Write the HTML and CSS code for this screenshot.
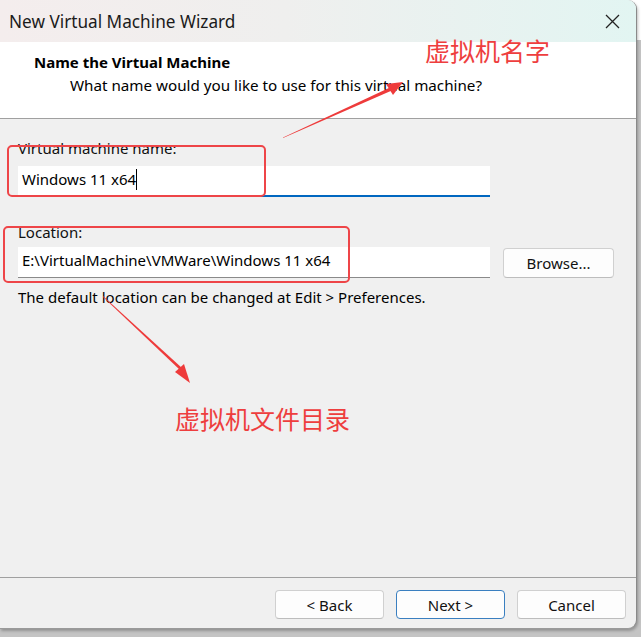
FILE: index.html
```html
<!DOCTYPE html>
<html>
<head>
<meta charset="utf-8">
<link rel="stylesheet" href="styles.css">
</head>
<body>
<div class="screen">
  <div class="window">
    <div class="titlebar">
      <span class="title">New Virtual Machine Wizard</span>
      <svg class="close" width="15" height="15" viewBox="0 0 15 15"><path d="M1 1 L14 14 M14 1 L1 14" stroke="#222" stroke-width="1.3" fill="none"/></svg>
    </div>
    <div class="header">
      <div class="h-title">Name the Virtual Machine</div>
      <div class="h-sub">What name would you like to use for this virtual machine?</div>
    </div>
    <div class="content">
      <div class="label">Virtual machine name:</div>
      <div class="input focused name-input">Windows 11 x64<span class="caret"></span></div>
      <div class="label loc-label">Location:</div>
      <div class="row">
        <div class="input">E:\VirtualMachine\VMWare\Windows 11 x64</div>
        <div class="btn browse">Browse...</div>
      </div>
      <div class="note">The default location can be changed at Edit &gt; Preferences.</div>
    </div>
    <div class="footer">
      <div class="btn">&lt; Back</div>
      <div class="btn primary">Next &gt;</div>
      <div class="btn">Cancel</div>
    </div>
  </div>

  <div class="redbox box-name"></div>
  <div class="redbox box-loc"></div>
  <div class="anno anno-name">虚拟机名字</div>
  <div class="anno anno-loc">虚拟机文件目录</div>
  <svg class="arrows" width="641" height="637" viewBox="0 0 641 637">
    <polygon fill="#ee3b3b" points="283,137.5 391,87 393,90 283,138"/>
    <polygon fill="#ee3b3b" points="403,82 386,84 393,95"/>
    <polygon fill="#ee3b3b" points="103,297 180,370 182,368 103,296"/>
    <polygon fill="#ee3b3b" points="190,383 175,372 184,364"/>
  </svg>
</div>
</body>
</html>
```
FILE: styles.css
```css
* { box-sizing: border-box; }
html, body { margin: 0; padding: 0; }
body {
  width: 641px;
  height: 637px;
  overflow: hidden;
  background: #c9c9c9;
  font-family: "Noto Sans", "Liberation Sans", sans-serif;
  color: #000;
}
.screen {
  position: relative;
  width: 641px;
  height: 637px;
  background: linear-gradient(#ffffff 0, #ffffff 40px, #c4c4c4 40px);
}
.window {
  width: 637px;
  height: 629px;
  background: #f0f0f0;
  border-right: 1px solid #8a8a8a;
  border-bottom: 1px solid #9a9a9a;
  border-radius: 0 9px 9px 0;
  box-shadow: 1px 2px 3px rgba(0,0,0,0.25);
  display: flex;
  flex-direction: column;
  overflow: hidden;
}
.titlebar {
  height: 42px;
  flex: none;
  display: flex;
  align-items: center;
  justify-content: space-between;
  padding: 0 16px 0 9px;
  background: linear-gradient(90deg, #f4eded 0%, #efefee 45%, #e2f5f2 100%);
}
.title { font-size: 17.2px; color: #1b1b1b; }
.close { display: block; }
.header {
  height: 77px;
  flex: none;
  background: #fff;
  border-bottom: 1px solid #a0a0a0;
  padding: 9px 0 0 34px;
}
.h-title { font-weight: bold; font-size: 15px; line-height: 22px; }
.h-sub { font-size: 15.2px; line-height: 22px; margin: 1px 0 0 36px; }
.content {
  flex: 1;
  padding: 18px 0 0 18px;
  font-size: 15px;
}
.label { line-height: 22px; color: #111; }
.name-input { margin-top: 7px; }
.loc-label { margin-top: 24px; margin-bottom: 4px; }
.input {
  width: 472px;
  height: 31px;
  background: #fff;
  border-bottom: 1px solid #8a8a8a;
  padding: 2px 0 0 4px;
  line-height: 22px;
  font-size: 15px;
  display: flex;
  align-items: flex-start;
}
.input.focused { border-bottom: 2px solid #0067c0; }
.caret {
  display: inline-block;
  width: 1px;
  height: 21px;
  background: #000;
  margin-top: 1px;
}
.row { display: flex; align-items: center; gap: 13px; }
.btn {
  width: 109px;
  height: 29px;
  background: #fdfdfd;
  border: 1px solid #d0d0d0;
  border-bottom-color: #bdbdbd;
  border-radius: 4px;
  display: flex;
  align-items: center;
  justify-content: center;
  font-size: 15px;
  color: #111;
}
.browse { width: 111px; height: 30px; margin-top: 1px; }
.note { margin-top: 8px; line-height: 22px; }
.footer {
  flex: none;
  height: 51px;
  border-top: 1px solid #a0a0a0;
  display: flex;
  justify-content: flex-end;
  gap: 12px;
  padding: 12px 10px 0 0;
}
.footer .btn { width: 109px; height: 29px; }
.btn.primary { border: 1px solid #3a7fc0; }
.redbox {
  position: absolute;
  border: 2.5px solid #ee4548;
  border-radius: 5px;
}
.box-name { left: 7px; top: 145px; width: 259px; height: 52px; }
.box-loc { left: 3px; top: 226px; width: 347px; height: 57px; }
.anno {
  position: absolute;
  font-family: "Noto Sans CJK SC", sans-serif;
  font-size: 25px;
  line-height: 30px;
  color: #ee3e3e;
}
.anno-name { left: 425px; top: 35px; }
.anno-loc { left: 175px; top: 403px; }
.arrows { position: absolute; left: 0; top: 0; }
```
